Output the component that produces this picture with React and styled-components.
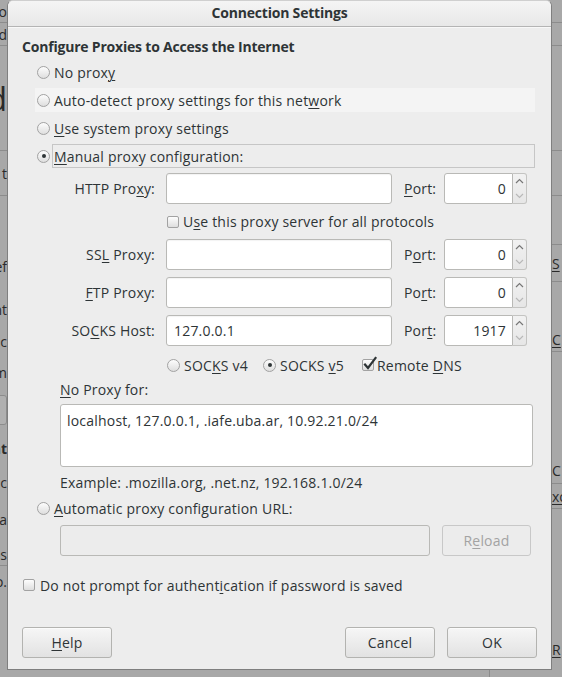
import React from 'react'
import styled, { createGlobalStyle } from 'styled-components'

const GlobalStyle = createGlobalStyle`
  body {
    margin: 0;
    background: #a8a8a8;
    font-family: "Open Sans", "DejaVu Sans", sans-serif;
    color: #2e3436;
  }
`

const Screen = styled.div`
  width: 562px;
  height: 677px;
  overflow: hidden;
  display: grid;
  grid-template-columns: 7px 545px 10px;
  grid-template-rows: 670px 7px;
  background: #a8a8a8;
`

// the dimmed window behind the dialog
const BgStrip = styled.div`
  grid-row: 1 / span 2;
  grid-column: ${p => p.$col};
  display: flex;
  flex-direction: column;
  overflow: hidden;
`

const BgRow = styled.div`
  height: ${p => p.$h}px;
  flex: none;
  display: flex;
  align-items: center;
  justify-content: ${p => (p.$end ? 'flex-end' : 'flex-start')};
  border-bottom: 1px solid ${p => (p.$line ? '#8c8c8c' : 'transparent')};
  font-size: ${p => p.$size || 14}px;
  font-weight: ${p => (p.$bold ? 700 : 400)};
  color: #2a2a2a;
  white-space: nowrap;
  overflow: hidden;
`

const BgBox = styled.div`
  height: 28px;
  width: 12px;
  margin-left: -4px;
  border: 1px solid #8c8c8c;
  border-radius: 3px;
  background: #b0b0b0;
`

const BgBottom = styled.div`
  grid-column: 2;
  grid-row: 2;
  display: flex;
  justify-content: flex-end;
  padding-right: 62px;
`

const BgRule = styled.div`
  width: 1px;
  background: #8c8c8c;
`

const Dialog = styled.div`
  grid-column: 2;
  grid-row: 1;
  box-sizing: border-box;
  background: #ededed;
  border: 1px solid #7f7f7f;
  border-top-color: #cfcfcf;
  border-radius: 6px 6px 0 0;
  display: flex;
  flex-direction: column;
  overflow: hidden;
`

const TitleBar = styled.div`
  height: 26px;
  flex: none;
  display: flex;
  align-items: center;
  justify-content: center;
  padding-bottom: 2px;
  box-sizing: border-box;
  font-size: 14px;
  font-weight: 700;
  letter-spacing: -0.2px;
  background: linear-gradient(#f4f4f4, #e8e8e8);
  border-bottom: 1px solid #b4b4b4;
  box-shadow: 0 1px 0 #f8f8f8;
`

const Body = styled.div`
  flex: 1;
  display: flex;
  flex-direction: column;
  padding: 0 14px 11px 14px;
  font-size: 14px;
  letter-spacing: 0.2px;
`

const Heading = styled.div`
  margin-top: 10px;
  line-height: 19px;
  font-weight: 700;
  letter-spacing: -0.2px;
`

const RadioList = styled.div`
  margin: ${p => p.$mt ?? 4}px 2px 0 13px;
  display: flex;
  flex-direction: column;
  gap: 4px;
`

const OptionRow = styled.div`
  height: 24px;
  display: flex;
  align-items: center;
  padding-left: 2px;
  background: ${p => (p.$hover ? '#f4f4f4' : 'transparent')};
`

const OptionLabel = styled.span`
  flex: ${p => (p.$fill ? 1 : 'none')};
  align-self: stretch;
  display: flex;
  align-items: center;
  white-space: pre;
  margin-left: ${p => p.$gap ?? 2}px;
  padding-left: 1px;
  border: 1px solid ${p => (p.$focus ? '#c6c6c6' : 'transparent')};
`

const Radio = styled.span`
  flex: none;
  width: 13px;
  height: 13px;
  box-sizing: border-box;
  border-radius: 50%;
  border: 1px solid #a2a2a2;
  background: linear-gradient(#fdfdfd, #dedede);
  display: flex;
  align-items: center;
  justify-content: center;
  &::after {
    content: '';
    width: 4px;
    height: 4px;
    border-radius: 50%;
    background: #2e3436;
    display: ${p => (p.$on ? 'block' : 'none')};
  }
`

const Box = styled.span`
  flex: none;
  position: relative;
  width: 12px;
  height: 12px;
  box-sizing: border-box;
  border-radius: 2px;
  border: 1px solid #a2a2a2;
  background: linear-gradient(#fdfdfd, #dedede);
`

const Tick = styled.svg`
  position: absolute;
  left: 0;
  top: -4px;
`

const Mn = styled.span`
  text-decoration: underline;
  text-underline-offset: 2px;
  text-decoration-thickness: 1px;
`

const ProxyGrid = styled.div`
  margin-top: 5px;
  display: grid;
  grid-template-columns: 133px 226px 30px 83px;
  column-gap: 11px;
  row-gap: 7px;
  align-items: center;
`

const FieldLabel = styled.div`
  text-align: ${p => (p.$left ? 'left' : 'right')};
  white-space: nowrap;
  margin-left: ${p => (p.$left ? 1 : 0)}px;
`

const Field = styled.div`
  height: 31px;
  box-sizing: border-box;
  border: 1px solid #b9b9b6;
  border-radius: 3px;
  background: ${p => (p.$disabled ? '#ececec' : '#ffffff')};
  box-shadow: ${p => (p.$disabled ? 'none' : 'inset 0 1px 1px rgba(0,0,0,0.05)')};
  display: flex;
  align-items: center;
  padding: 0 7px;
  width: ${p => (p.$w ? `${p.$w}px` : 'auto')};
  white-space: nowrap;
`

const SpinWrap = styled.div`
  height: 31px;
  display: flex;
`

const SpinInput = styled.div`
  flex: 1;
  box-sizing: border-box;
  border: 1px solid #b9b9b6;
  border-radius: 3px 0 0 3px;
  background: #fff;
  display: flex;
  align-items: center;
  justify-content: flex-end;
  padding-right: 6px;
`

const SpinButtons = styled.div`
  width: 14px;
  box-sizing: border-box;
  border: 1px solid #c4c4c2;
  border-left: none;
  border-radius: 0 3px 3px 0;
  background: linear-gradient(#f2f2f2, #e6e6e6);
  display: flex;
  flex-direction: column;
  align-items: center;
  justify-content: space-around;
`

const SpanRow = styled.div`
  grid-column: ${p => p.$cols};
  height: ${p => p.$h}px;
  display: flex;
  align-items: center;
  padding-left: 1px;
`

const Choice = styled.span`
  display: flex;
  align-items: center;
  width: ${p => (p.$w ? `${p.$w}px` : 'auto')};
`

const ChoiceText = styled.span`
  margin-left: ${p => p.$gap || 4}px;
  white-space: pre;
`

const Indented = styled.div`
  margin-left: 38px;
  display: flex;
  flex-direction: column;
`

const Line = styled.div`
  line-height: 18px;
  margin-top: ${p => p.$mt || 0}px;
`

const TextArea = styled.div`
  margin: 5px 4px 0 0;
  height: 63px;
  box-sizing: border-box;
  border: 1px solid #b9b9b6;
  border-radius: 3px;
  background: #fff;
  padding: 7px 6px;
  line-height: 18px;
`

const UrlRow = styled.div`
  margin-top: 5px;
  display: flex;
  align-items: center;
  gap: 12px;
  margin-right: 5px;
`

const Button = styled.div`
  width: ${p => p.$w || 90}px;
  height: 31px;
  box-sizing: border-box;
  border: 1px solid ${p => (p.$disabled ? '#c8c8c8' : '#b3b3b0')};
  border-radius: 3px;
  background: ${p => (p.$disabled ? '#ececec' : 'linear-gradient(#f6f6f6, #e2e2e2)')};
  color: ${p => (p.$disabled ? '#a3a3a3' : '#2e3436')};
  display: flex;
  align-items: center;
  justify-content: center;
  box-shadow: ${p => (p.$disabled ? 'none' : '0 1px 0 rgba(255,255,255,0.6) inset')};
`

const CheckRow = styled.div`
  margin-top: 19px;
  height: 20px;
  display: flex;
  align-items: center;
  padding-left: 1px;
`

const Footer = styled.div`
  margin-top: auto;
  display: flex;
  gap: 12px;
`

const Spacer = styled.div`
  flex: 1;
`

const Chevron = ({ up, faded }) => (
  <svg width="9" height="6" viewBox="0 0 9 6">
    <path
      d={up ? 'M1 5 L4.5 1.5 L8 5' : 'M1 1 L4.5 4.5 L8 1'}
      fill="none"
      stroke={faded ? '#b8b8b8' : '#777'}
      strokeWidth="1.2"
    />
  </svg>
)

const Spin = ({ value }) => (
  <SpinWrap>
    <SpinInput>{value}</SpinInput>
    <SpinButtons>
      <Chevron up />
      <Chevron faded />
    </SpinButtons>
  </SpinWrap>
)

const leftRows = [
  { h: 22, t: 'o', line: true },
  { h: 22, t: 'd', line: true },
  { h: 104, t: 'd', size: 32, line: true },
  { h: 44, t: 't', line: true },
  { h: 48 },
  { h: 42, t: 'ef' },
  { h: 42, t: 'nt' },
  { h: 20, t: 'c' },
  { h: 40, t: 'm' },
  { h: 34, box: true },
  { h: 40, t: 'nt', bold: true },
  { h: 26, t: 'ac' },
  { h: 46, t: 'a' },
  { h: 22, t: 'os', line: true },
  { h: 30, t: 'o.' },
]

const rightRows = [
  { h: 22, line: true },
  { h: 22, line: true },
  { h: 104, line: true },
  { h: 44, line: true },
  { h: 48, line: true },
  { h: 36, t: 'S', mn: true, line: true },
  { h: 44 },
  { h: 24, t: 'C', mn: true, line: true },
  { h: 104 },
  { h: 26, t: 'C', line: true },
  { h: 24, t: 'xo', mn: true, line: true },
  { h: 128 },
  { h: 22, t: 'R', mn: true },
]

const App = () => {
  return (
    <>
      <GlobalStyle />
      <Screen>
        <BgStrip $col={1}>
          {leftRows.map((r, i) => (
            <BgRow key={i} $h={r.h} $line={r.line} $size={r.size} $bold={r.bold} $end>
              {r.box ? <BgBox /> : r.t}
            </BgRow>
          ))}
        </BgStrip>

        <Dialog>
          <TitleBar>Connection Settings</TitleBar>
          <Body>
            <Heading>Configure Proxies to Access the Internet</Heading>

            <RadioList>
              <OptionRow>
                <Radio />
                <OptionLabel>No prox<Mn>y</Mn></OptionLabel>
              </OptionRow>
              <OptionRow $hover>
                <Radio />
                <OptionLabel $fill>Auto-detect proxy settings for this net<Mn>w</Mn>ork</OptionLabel>
              </OptionRow>
              <OptionRow>
                <Radio />
                <OptionLabel><Mn>U</Mn>se system proxy settings</OptionLabel>
              </OptionRow>
              <OptionRow>
                <Radio $on />
                <OptionLabel $fill $focus><Mn>M</Mn>anual proxy configuration:</OptionLabel>
              </OptionRow>
            </RadioList>

            <ProxyGrid>
              <FieldLabel>HTTP Pro<Mn>x</Mn>y:</FieldLabel>
              <Field />
              <FieldLabel $left><Mn>P</Mn>ort:</FieldLabel>
              <Spin value="0" />

              <SpanRow $cols="2 / span 3" $h={21}>
                <Box />
                <ChoiceText>U<Mn>s</Mn>e this proxy server for all protocols</ChoiceText>
              </SpanRow>

              <FieldLabel>SS<Mn>L</Mn> Proxy:</FieldLabel>
              <Field />
              <FieldLabel $left>P<Mn>o</Mn>rt:</FieldLabel>
              <Spin value="0" />

              <FieldLabel><Mn>F</Mn>TP Proxy:</FieldLabel>
              <Field />
              <FieldLabel $left>Po<Mn>r</Mn>t:</FieldLabel>
              <Spin value="0" />

              <FieldLabel>SO<Mn>C</Mn>KS Host:</FieldLabel>
              <Field>127.0.0.1</Field>
              <FieldLabel $left>Por<Mn>t</Mn>:</FieldLabel>
              <Spin value="1917" />

              <SpanRow $cols="2 / span 3" $h={24}>
                <Choice $w={96}>
                  <Radio />
                  <ChoiceText>SOC<Mn>K</Mn>S v4</ChoiceText>
                </Choice>
                <Choice $w={99}>
                  <Radio $on />
                  <ChoiceText>SOCKS <Mn>v</Mn>5</ChoiceText>
                </Choice>
                <Choice>
                  <Box>
                    <Tick width="16" height="16" viewBox="0 0 16 16">
                      <path d="M2 8.5 L5 12 L12.5 2" fill="none" stroke="#2e3436" strokeWidth="2.2" strokeLinecap="square" />
                    </Tick>
                  </Box>
                  <ChoiceText $gap={3}>Remote <Mn>D</Mn>NS</ChoiceText>
                </Choice>
              </SpanRow>
            </ProxyGrid>

            <Indented>
              <Line $mt={4}><Mn>N</Mn>o Proxy for:</Line>
              <TextArea>localhost, 127.0.0.1, .iafe.uba.ar, 10.92.21.0/24</TextArea>
              <Line $mt={7}>Example: .mozilla.org, .net.nz, 192.168.1.0/24</Line>
            </Indented>

            <RadioList $mt={4}>
              <OptionRow>
                <Radio />
                <OptionLabel><Mn>A</Mn>utomatic proxy configuration URL:</OptionLabel>
              </OptionRow>
            </RadioList>

            <Indented>
              <UrlRow>
                <Field $disabled $w={370} />
                <Button $disabled $w={89}>R<Mn>e</Mn>load</Button>
              </UrlRow>
            </Indented>

            <CheckRow>
              <Box />
              <ChoiceText $gap={5}>Do not prompt for authent<Mn>i</Mn>cation if password is saved</ChoiceText>
            </CheckRow>

            <Footer>
              <Button><Mn>H</Mn>elp</Button>
              <Spacer />
              <Button>Cancel</Button>
              <Button>OK</Button>
            </Footer>
          </Body>
        </Dialog>

        <BgStrip $col={3}>
          {rightRows.map((r, i) => (
            <BgRow key={i} $h={r.h} $line={r.line}>
              {r.t && (r.mn ? <Mn>{r.t}</Mn> : r.t)}
            </BgRow>
          ))}
        </BgStrip>

        <BgBottom>
          <BgRule />
        </BgBottom>
      </Screen>
    </>
  )
}

export default App
